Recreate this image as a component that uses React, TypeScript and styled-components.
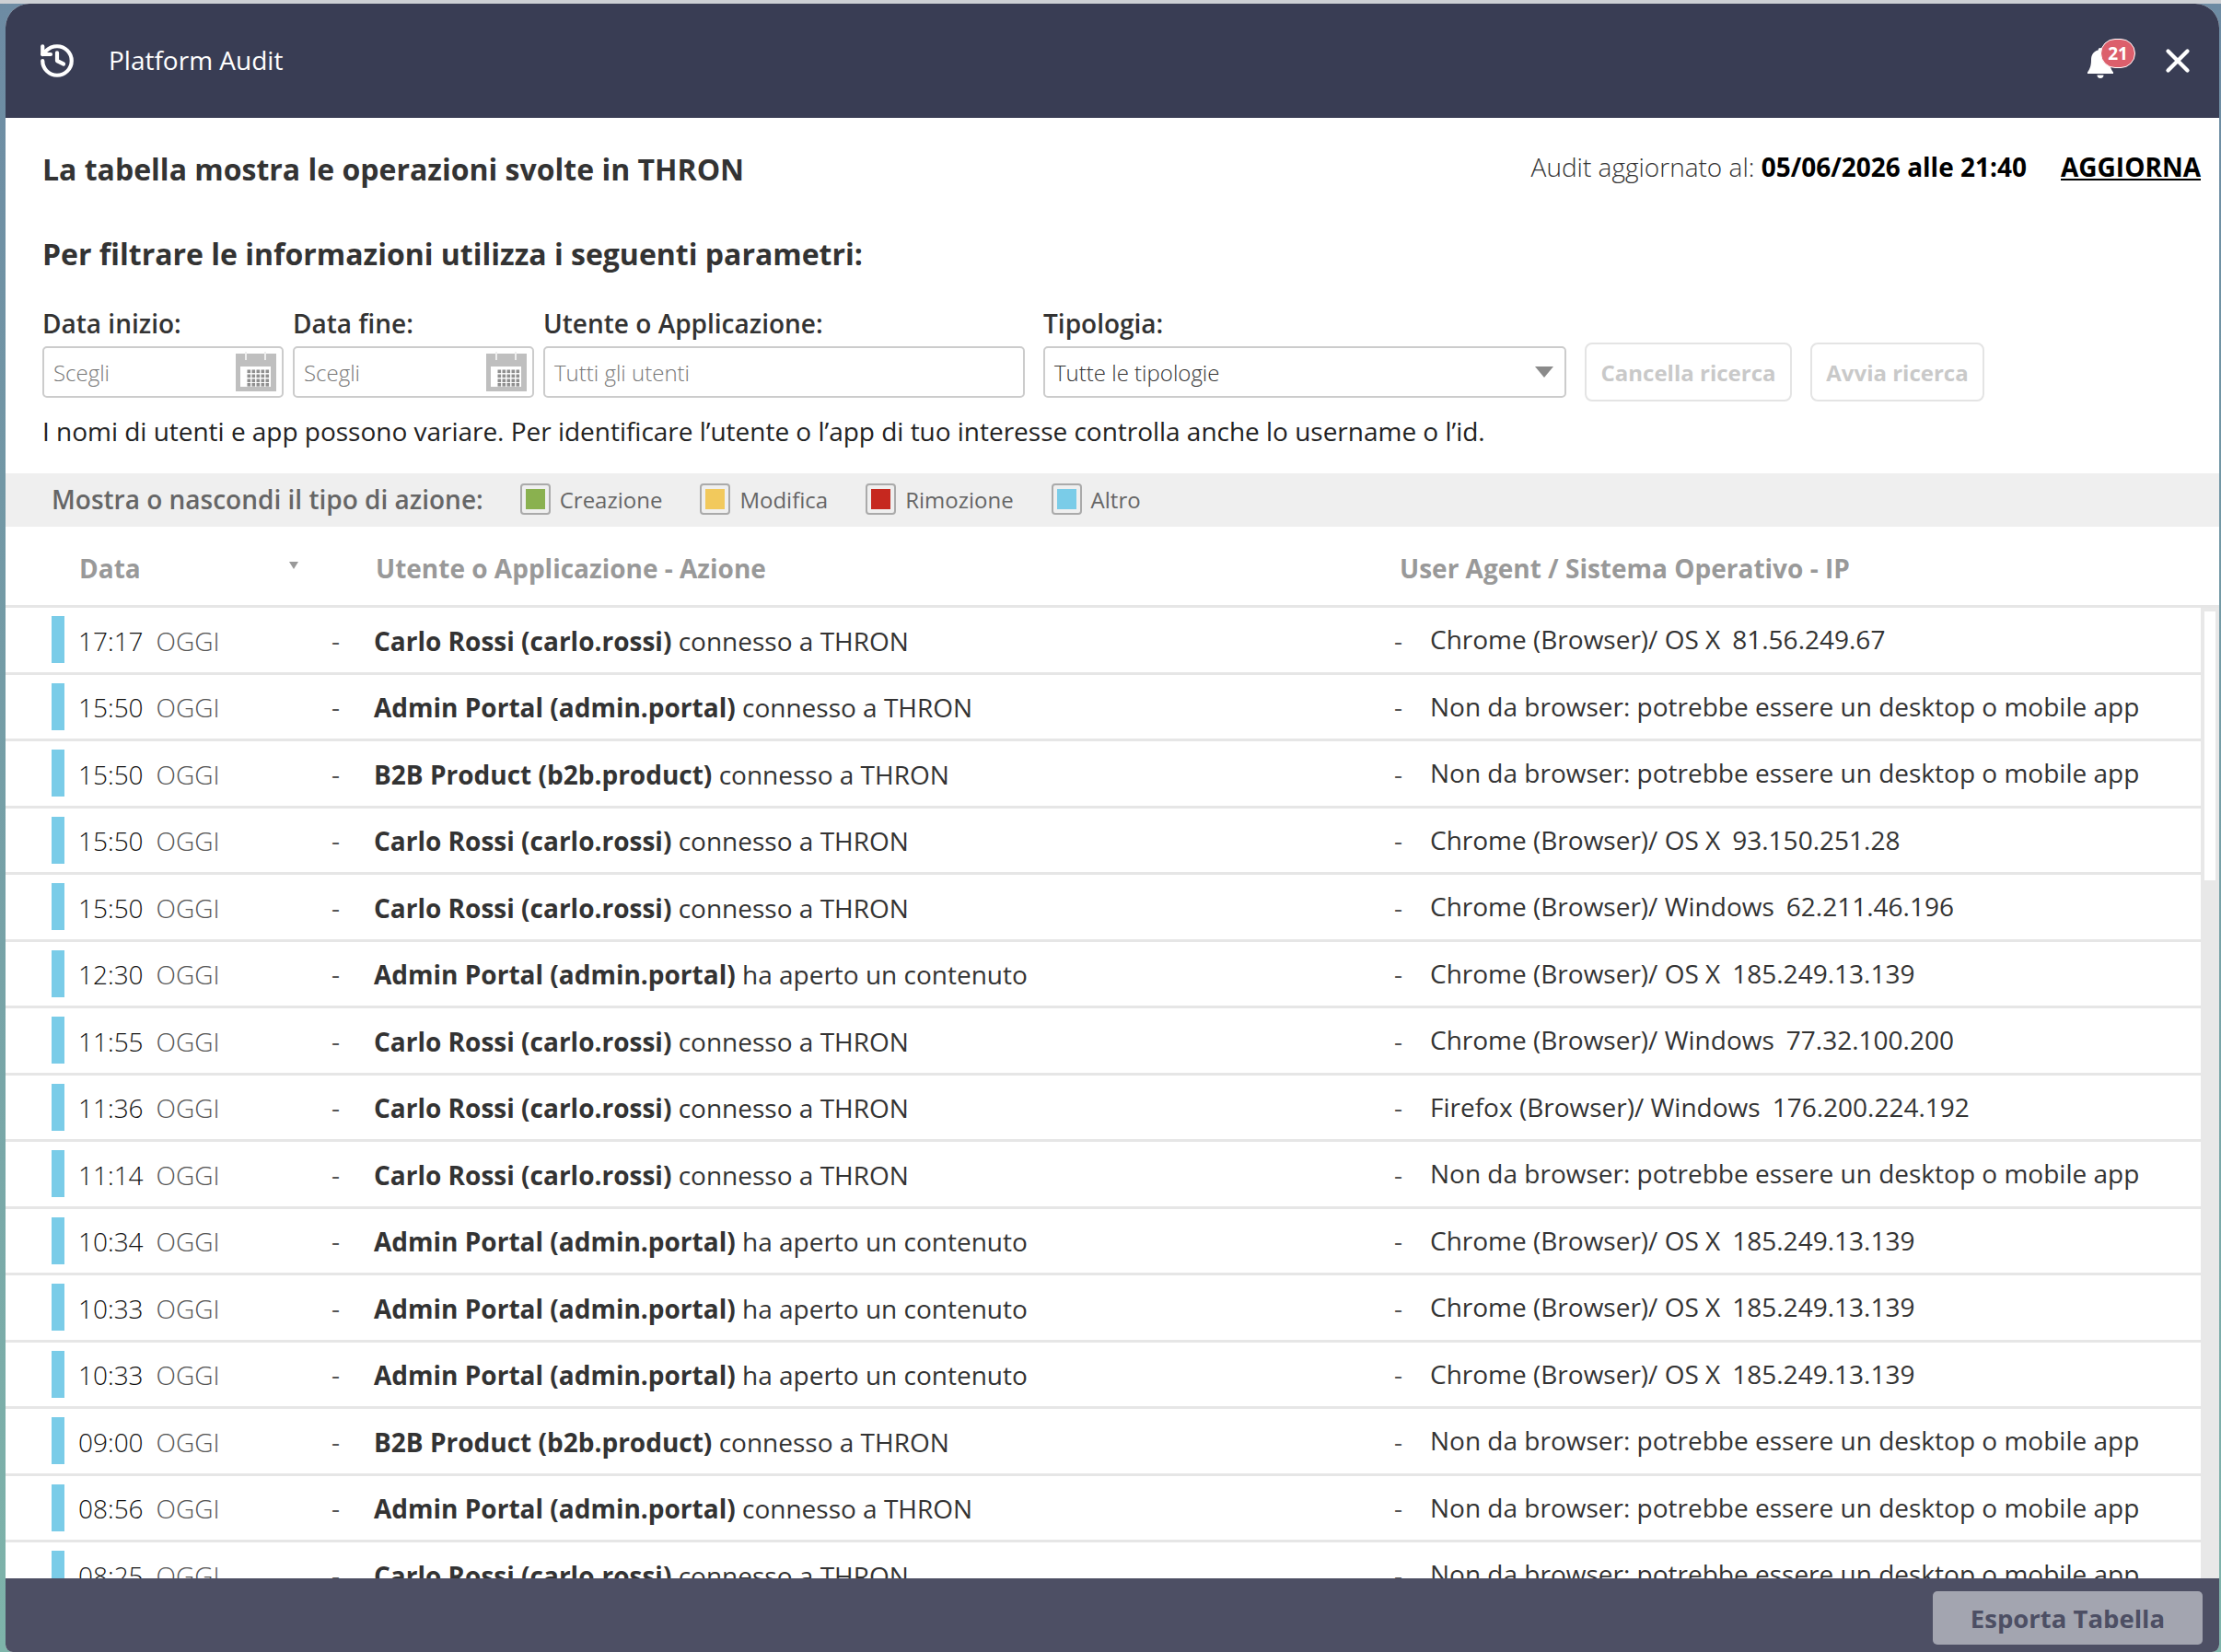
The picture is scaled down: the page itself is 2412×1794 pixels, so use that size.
import React from "react";
import styled, { createGlobalStyle } from "styled-components";
import { History, X } from "lucide-react";

const rows = [
  { time: "17:17", user: "Carlo Rossi (carlo.rossi)", action: "connesso a THRON", agent: "Chrome (Browser)/ OS X", ip: "81.56.249.67" },
  { time: "15:50", user: "Admin Portal (admin.portal)", action: "connesso a THRON", agent: "Non da browser: potrebbe essere un desktop o mobile app", ip: "" },
  { time: "15:50", user: "B2B Product (b2b.product)", action: "connesso a THRON", agent: "Non da browser: potrebbe essere un desktop o mobile app", ip: "" },
  { time: "15:50", user: "Carlo Rossi (carlo.rossi)", action: "connesso a THRON", agent: "Chrome (Browser)/ OS X", ip: "93.150.251.28" },
  { time: "15:50", user: "Carlo Rossi (carlo.rossi)", action: "connesso a THRON", agent: "Chrome (Browser)/ Windows", ip: "62.211.46.196" },
  { time: "12:30", user: "Admin Portal (admin.portal)", action: "ha aperto un contenuto", agent: "Chrome (Browser)/ OS X", ip: "185.249.13.139" },
  { time: "11:55", user: "Carlo Rossi (carlo.rossi)", action: "connesso a THRON", agent: "Chrome (Browser)/ Windows", ip: "77.32.100.200" },
  { time: "11:36", user: "Carlo Rossi (carlo.rossi)", action: "connesso a THRON", agent: "Firefox (Browser)/ Windows", ip: "176.200.224.192" },
  { time: "11:14", user: "Carlo Rossi (carlo.rossi)", action: "connesso a THRON", agent: "Non da browser: potrebbe essere un desktop o mobile app", ip: "" },
  { time: "10:34", user: "Admin Portal (admin.portal)", action: "ha aperto un contenuto", agent: "Chrome (Browser)/ OS X", ip: "185.249.13.139" },
  { time: "10:33", user: "Admin Portal (admin.portal)", action: "ha aperto un contenuto", agent: "Chrome (Browser)/ OS X", ip: "185.249.13.139" },
  { time: "10:33", user: "Admin Portal (admin.portal)", action: "ha aperto un contenuto", agent: "Chrome (Browser)/ OS X", ip: "185.249.13.139" },
  { time: "09:00", user: "B2B Product (b2b.product)", action: "connesso a THRON", agent: "Non da browser: potrebbe essere un desktop o mobile app", ip: "" },
  { time: "08:56", user: "Admin Portal (admin.portal)", action: "connesso a THRON", agent: "Non da browser: potrebbe essere un desktop o mobile app", ip: "" },
  { time: "08:25", user: "Carlo Rossi (carlo.rossi)", action: "connesso a THRON", agent: "Non da browser: potrebbe essere un desktop o mobile app", ip: "" },
];

const legend = [
  { label: "Creazione", color: "#8ab14f", gap: 41 },
  { label: "Modifica", color: "#f2c95c", gap: 41 },
  { label: "Rimozione", color: "#c6281f", gap: 41 },
  { label: "Altro", color: "#7accE8", gap: 0 },
];

const CalendarIcon = () => (
  <svg width="44" height="44" viewBox="0 0 44 44">
    <path fill="#bfbfbf" d="M0 2h44v41H0z" />
    <path fill="#fff" d="M5 16h33v22H5z" />
    <path fill="none" stroke="#eee" strokeWidth="2" d="M11 0v9M32 0v9" />
    {[19.5, 24.5, 29.5, 34].map((y) =>
      [12.5, 17.5, 22.5, 27.5, 32.5].map((x) => <rect key={`${x}-${y}`} x={x} y={y} width="3.6" height="3.6" fill="#8f8f8f" />)
    )}
  </svg>
);

const BellIcon = () => (
  <svg width="28" height="33" viewBox="0 0 28 33">
    <path fill="#fff" d="M14 0a2.400 2.400 0 0 1 2.400 2.600C21.600 3.800 24 8 24 13c0 7 1.600 10 4 13.500V28H0v-1.500C2.400 23 4 20 4 13c0-5 2.400-9.200 7.600-10.400A2.400 2.400 0 0 1 14 0z" />
    <path fill="#fff" d="M10.500 29.500h7a3.500 3.500 0 0 1-7 0z" />
  </svg>
);

export default function App() {
  return (
    <>
      <GlobalStyle />
      <Dialog>
        <Header>
          <HeaderLeft>
            <History size={42} strokeWidth={2.4} color="#fff" />
            <Title>Platform Audit</Title>
          </HeaderLeft>
          <HeaderRight>
            <Bell>
              <BellIcon />
              <Badge>21</Badge>
            </Bell>
            <CloseIcon size={42} strokeWidth={2.4} color="#fff" />
          </HeaderRight>
        </Header>

        <Intro>
          <TopLine>
            <Heading>La tabella mostra le operazioni svolte in THRON</Heading>
            <Updated>
              Audit aggiornato al: <strong>05/06/2026 alle 21:40</strong>
              <Refresh>AGGIORNA</Refresh>
            </Updated>
          </TopLine>
          <SubHeading>Per filtrare le informazioni utilizza i seguenti parametri:</SubHeading>
          <Filters>
            <Field $width={262}>
              <FieldLabel>Data inizio:</FieldLabel>
              <InputBox>
                <Placeholder>Scegli</Placeholder>
                <CalendarIcon />
              </InputBox>
            </Field>
            <Field $width={262}>
              <FieldLabel>Data fine:</FieldLabel>
              <InputBox>
                <Placeholder>Scegli</Placeholder>
                <CalendarIcon />
              </InputBox>
            </Field>
            <Field $width={523}>
              <FieldLabel>Utente o Applicazione:</FieldLabel>
              <InputBox>
                <Placeholder>Tutti gli utenti</Placeholder>
              </InputBox>
            </Field>
            <Field $width={568} $offset={10}>
              <FieldLabel>Tipologia:</FieldLabel>
              <InputBox>
                <SelectValue>Tutte le tipologie</SelectValue>
                <Caret />
              </InputBox>
            </Field>
            <GhostButton $width={225}>Cancella ricerca</GhostButton>
            <GhostButton $width={189}>Avvia ricerca</GhostButton>
          </Filters>
          <Note>I nomi di utenti e app possono variare. Per identificare l’utente o l’app di tuo interesse controlla anche lo username o l’id.</Note>
        </Intro>

        <LegendBar>
          <LegendTitle>Mostra o nascondi il tipo di azione:</LegendTitle>
          {legend.map((item) => (
            <LegendItem key={item.label} $gap={item.gap}>
              <Check $color={item.color} />
              <LegendLabel>{item.label}</LegendLabel>
            </LegendItem>
          ))}
        </LegendBar>

        <TableHead>
          <HeadDate>
            Data
            <SortCaret />
          </HeadDate>
          <HeadAction>Utente o Applicazione - Azione</HeadAction>
          <span>User Agent / Sistema Operativo - IP</span>
        </TableHead>

        <TableBody>
          <Rows>
            {rows.map((r, i) => (
              <Row key={i}>
                <Bar />
                <DateCell>
                  {r.time}
                  <Today>OGGI</Today>
                </DateCell>
                <Dash>-</Dash>
                <ActionCell>
                  <strong>{r.user}</strong> {r.action}
                </ActionCell>
                <Dash>-</Dash>
                <AgentCell>
                  {r.agent}
                  {r.ip && <Ip>{r.ip}</Ip>}
                </AgentCell>
              </Row>
            ))}
          </Rows>
          <Track>
            <Thumb />
          </Track>
        </TableBody>

        <Footer>
          <ExportButton>Esporta Tabella</ExportButton>
        </Footer>
      </Dialog>
    </>
  );
}

const GlobalStyle = createGlobalStyle`
  html, body {
    margin: 0;
    padding: 0;
    height: 1794px;
    overflow: hidden;
    background:
      linear-gradient(#cdd0d4 0 4px, transparent 4px),
      linear-gradient(#6d8ba3, #7eb4aa);
    font-family: "Open Sans", sans-serif;
  }
`;

const Dialog = styled.div`
  box-sizing: border-box;
  margin: 4px 2px 0 6px;
  height: 1790px;
  background: #fff;
  border-radius: 26px 26px 8px 8px;
  overflow: hidden;
  display: flex;
  flex-direction: column;
`;

const Header = styled.div`
  flex: none;
  height: 124px;
  background: #393d54;
  display: flex;
  align-items: center;
  justify-content: space-between;
  padding: 0 24px 0 35px;
`;

const HeaderLeft = styled.div`
  display: flex;
  align-items: center;
  gap: 35px;
`;

const Title = styled.div`
  color: #fff;
  font-size: 28px;
  margin-top: -2px;
`;

const HeaderRight = styled.div`
  display: flex;
  align-items: center;
  gap: 49px;
`;

const Bell = styled.div`
  position: relative;
  display: flex;
  margin-top: 4px;
`;

const Badge = styled.span`
  position: absolute;
  left: 14px;
  top: -10px;
  box-sizing: border-box;
  width: 38px;
  height: 32px;
  border-radius: 16px;
  border: 1.5px solid #fff;
  background: #dc5f6c;
  color: #fff;
  font-size: 19px;
  font-weight: 700;
  display: flex;
  align-items: center;
  justify-content: center;
`;

const CloseIcon = styled(X)`
  display: block;
`;

const Intro = styled.div`
  flex: none;
  height: 386px;
  box-sizing: border-box;
  padding: 34px 0 0 40px;
`;

const TopLine = styled.div`
  display: flex;
  align-items: center;
  justify-content: space-between;
  padding-right: 20px;
`;

const Heading = styled.div`
  font-size: 32px;
  font-weight: 700;
  color: #333;
`;

const Updated = styled.div`
  font-size: 28px;
  font-weight: 300;
  color: #333;
  margin-bottom: 5px;
  strong {
    font-weight: 700;
    color: #000;
  }
`;

const Refresh = styled.a`
  margin-left: 37px;
  font-weight: 700;
  color: #000;
  text-decoration: underline;
`;

const SubHeading = styled.div`
  margin-top: 49px;
  font-size: 32px;
  font-weight: 700;
  color: #333;
`;

const Filters = styled.div`
  margin-top: 35px;
  display: flex;
  align-items: flex-end;
  gap: 10px;
`;

const Field = styled.div<{ $width: number; $offset?: number }>`
  width: ${(p) => p.$width}px;
  margin-left: ${(p) => p.$offset ?? 0}px;
`;

const FieldLabel = styled.div`
  font-size: 28px;
  font-weight: 600;
  color: #333;
  margin-bottom: 6px;
`;

const InputBox = styled.div`
  box-sizing: border-box;
  height: 56px;
  border: 2px solid #ccc;
  border-radius: 5px;
  display: flex;
  align-items: center;
  justify-content: space-between;
  padding: 0 6px 0 10px;
`;

const Placeholder = styled.span`
  font-size: 24px;
  font-weight: 300;
  color: #777;
`;

const SelectValue = styled.span`
  font-size: 24px;
  font-weight: 300;
  color: #333;
`;

const Caret = styled.span`
  width: 0;
  height: 0;
  margin-right: 6px;
  border-left: 10px solid transparent;
  border-right: 10px solid transparent;
  border-top: 12px solid #8a8a8a;
`;

const GhostButton = styled.div<{ $width: number }>`
  box-sizing: border-box;
  width: ${(p) => p.$width}px;
  height: 64px;
  margin-left: 10px;
  margin-bottom: -4px;
  border: 2px solid #e4e4e4;
  border-radius: 8px;
  color: #c9c9c9;
  font-size: 24px;
  font-weight: 700;
  display: flex;
  align-items: center;
  justify-content: center;
`;

const Note = styled.div`
  margin-top: 17px;
  font-size: 28px;
  letter-spacing: -0.02px;
  color: #222;
`;

const LegendBar = styled.div`
  flex: none;
  box-sizing: border-box;
  height: 58px;
  background: #efefef;
  display: flex;
  align-items: center;
  padding: 0 0 2px 50px;
`;

const LegendTitle = styled.div`
  font-size: 28px;
  font-weight: 600;
  color: #666;
  margin-right: 40px;
`;

const LegendItem = styled.div<{ $gap: number }>`
  display: flex;
  align-items: center;
  gap: 10px;
  margin-right: ${(p) => p.$gap}px;
`;

const Check = styled.span<{ $color: string }>`
  box-sizing: border-box;
  width: 33px;
  height: 34px;
  padding: 4px;
  border: 2px solid #aaa;
  border-radius: 4px;
  background: ${(p) => p.$color} content-box;
`;

const LegendLabel = styled.span`
  font-size: 24px;
  font-weight: 400;
  color: #666;
`;

const TableHead = styled.div`
  flex: none;
  box-sizing: border-box;
  height: 88px;
  border-bottom: 3px solid #e6e6e6;
  display: flex;
  align-items: center;
  padding: 4px 0 0 80px;
  font-size: 28px;
  font-weight: 700;
  color: #999;
`;

const HeadDate = styled.span`
  width: 322px;
  display: flex;
  align-items: center;
  position: relative;
`;

const SortCaret = styled.span`
  position: absolute;
  left: 228px;
  top: 12px;
  width: 0;
  height: 0;
  border-left: 5px solid transparent;
  border-right: 5px solid transparent;
  border-top: 8px solid #999;
`;

const HeadAction = styled.span`
  width: 1112px;
`;

const TableBody = styled.div`
  flex: 1;
  min-height: 0;
  display: flex;
  overflow: hidden;
`;

const Rows = styled.div`
  flex: 1;
  min-width: 0;
`;

const Row = styled.div`
  box-sizing: border-box;
  height: 72.5px;
  border-bottom: 3px solid #e6e6e6;
  display: grid;
  grid-template-columns: 14px 290px 46px 1108px 39px 1fr;
  align-items: center;
  padding-left: 50px;
  font-size: 28px;
  color: #333;
`;

const Bar = styled.div`
  width: 14px;
  height: 51px;
  background: #7accE8;
`;

const DateCell = styled.div`
  padding: 2px 0 0 15px;
  font-weight: 300;
  color: #111;
`;

const Today = styled.span`
  margin-left: 14px;
  color: #555;
`;

const Dash = styled.div`
  color: #555;
`;

const ActionCell = styled.div`
  white-space: nowrap;
  padding-top: 2px;
  strong {
    font-weight: 700;
  }
`;

const AgentCell = styled.div`
  white-space: nowrap;
  padding-bottom: 1px;
`;

const Ip = styled.span`
  margin-left: 13px;
`;

const Track = styled.div`
  flex: none;
  width: 20px;
  background: #e8e8e8;
  padding: 4px;
  box-sizing: border-box;
`;

const Thumb = styled.div`
  height: 292px;
  background: #fff;
`;

const Footer = styled.div`
  flex: none;
  height: 80px;
  background: #4d4f64;
  display: flex;
  align-items: flex-start;
  justify-content: flex-end;
  padding: 14px 18px 0 0;
  box-sizing: border-box;
`;

const ExportButton = styled.div`
  box-sizing: border-box;
  width: 293px;
  height: 58px;
  border-radius: 5px;
  background: #a3a5b0;
  color: #4d4f64;
  font-size: 27.5px;
  font-weight: 700;
  display: flex;
  align-items: center;
  justify-content: center;
`;
